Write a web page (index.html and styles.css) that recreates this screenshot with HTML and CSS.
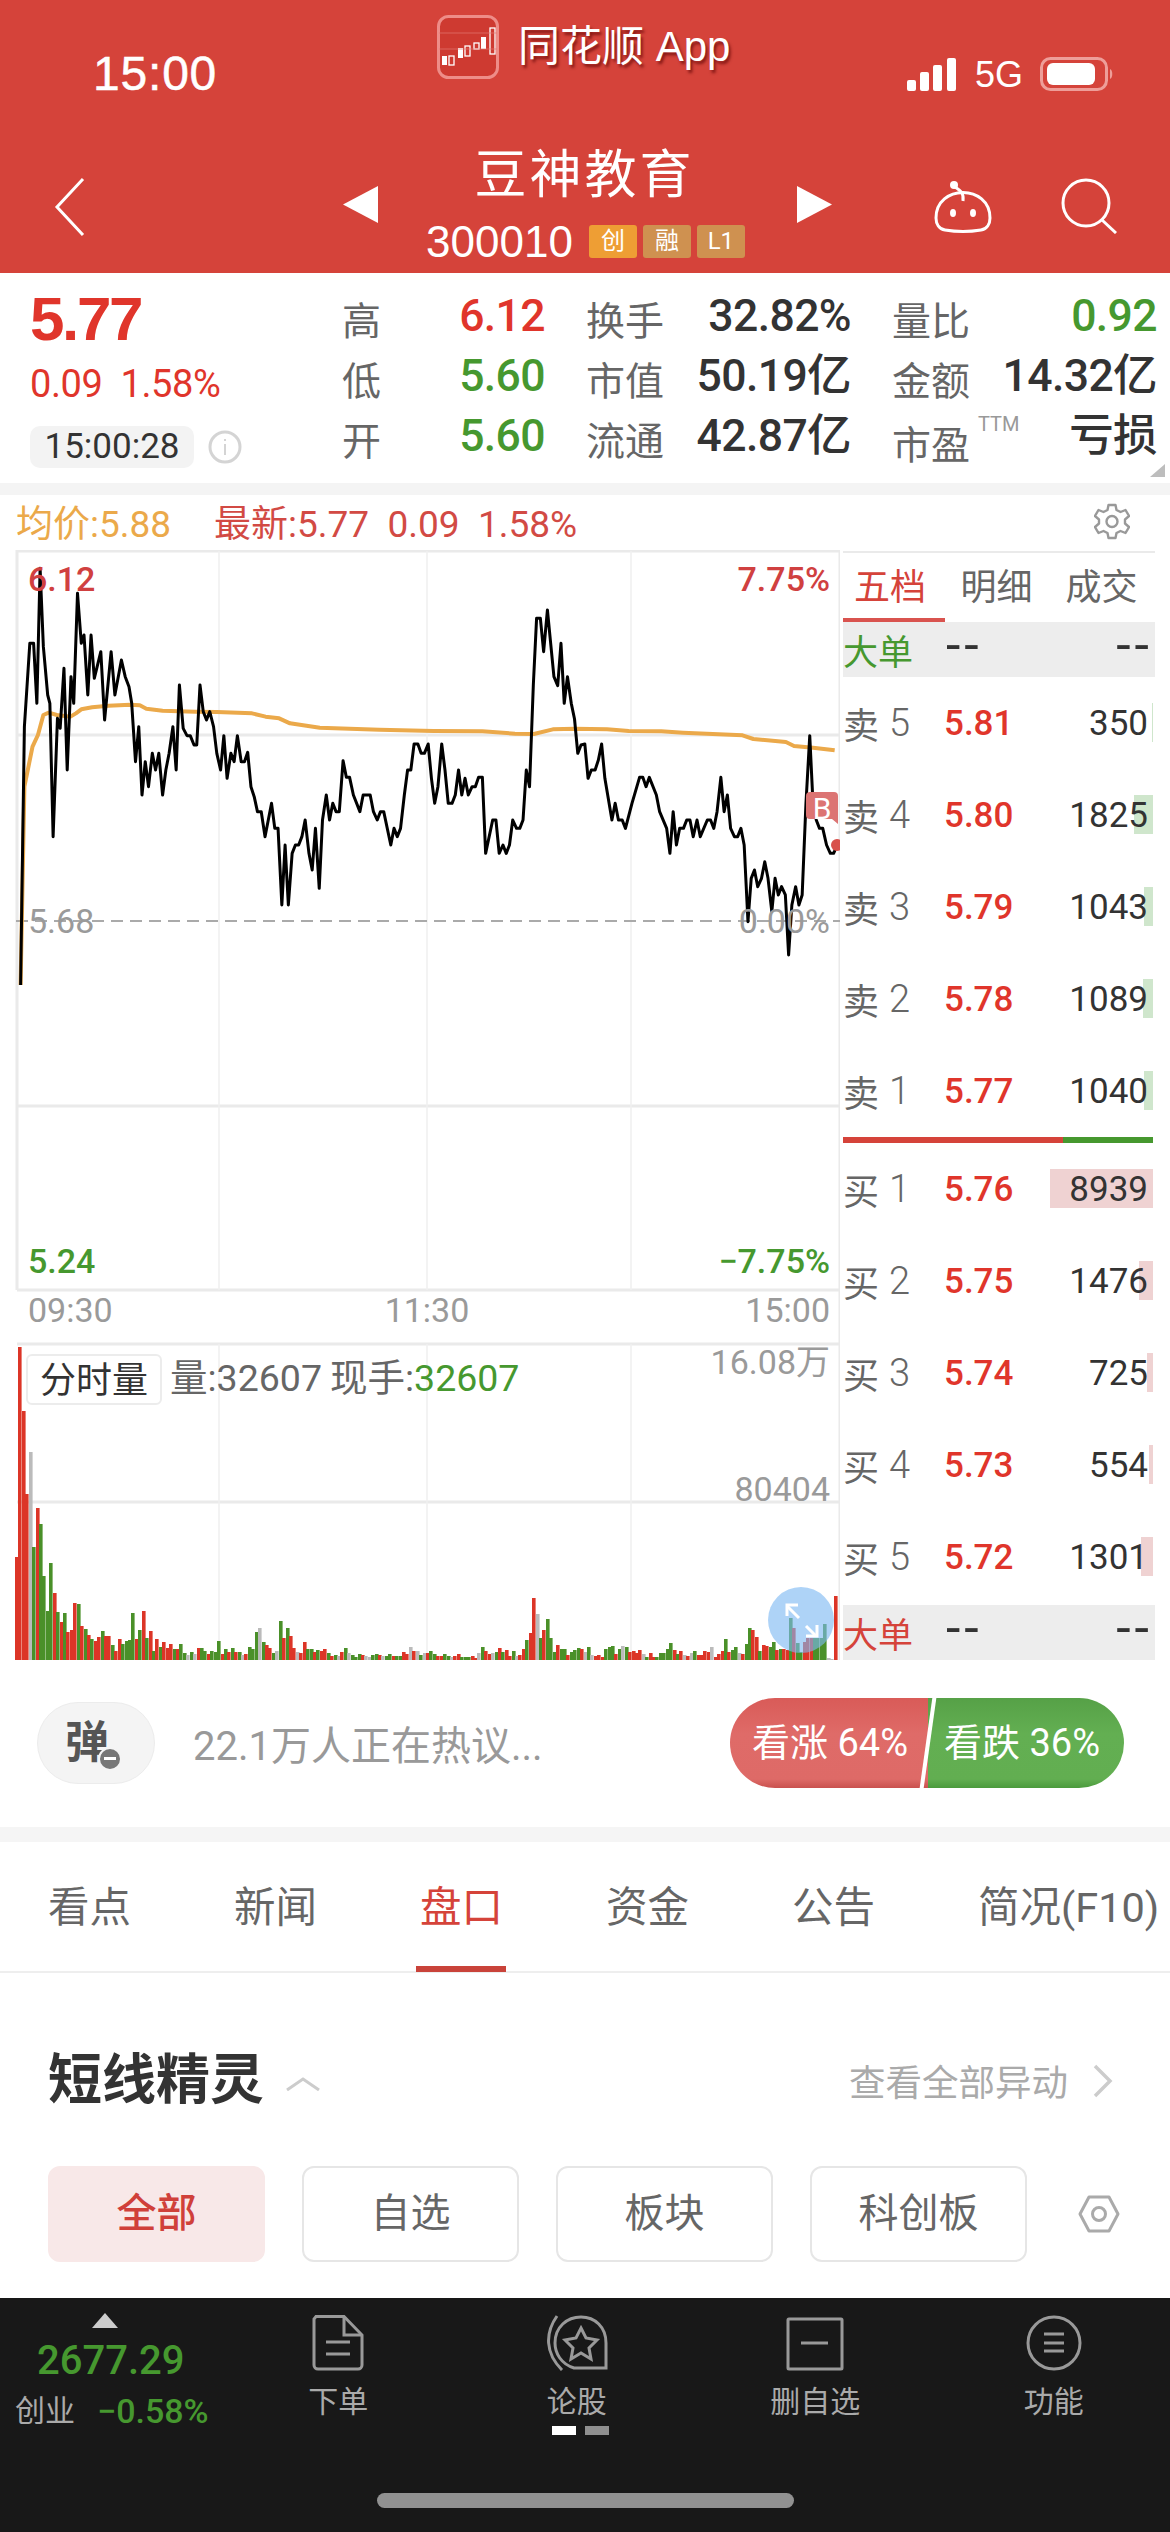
FILE: index.html
```html
<!DOCTYPE html>
<html lang="zh">
<head>
<meta charset="utf-8">
<title>豆神教育</title>
<link rel="stylesheet" href="styles.css">
</head>
<body>
<div class="page">
  <header class="header">
    <div class="status">
      <div class="clock">15:00</div>
      <div class="app">
        <svg class="app-icon" viewBox="0 0 62 64">
          <rect x="1.5" y="1.5" width="59" height="61" rx="10" fill="#CE3A31" stroke="#EE8D88" stroke-width="3"/>
          <g fill="#fff"><rect x="5" y="41" width="5" height="9"/><rect x="21" y="33" width="5" height="10"/><rect x="44" y="22" width="5" height="12"/></g>
          <g fill="none" stroke="#fff" stroke-width="1.3"><rect x="12" y="41" width="5" height="9"/><rect x="28" y="31" width="5" height="10"/><rect x="37" y="28" width="5" height="6"/><rect x="53" y="13" width="5" height="26"/></g>
          <path d="M2 34H60M2 18H60" stroke="#E27A72" stroke-width=".7"/>
        </svg>
        <span class="app-name">同花顺 App</span>
      </div>
      <div class="signals">
        <svg class="bars" viewBox="0 0 50 33"><g fill="#fff"><rect x="0" y="22" width="9" height="11" rx="2"/><rect x="13" y="14" width="9" height="19" rx="2"/><rect x="26" y="7" width="9" height="26" rx="2"/><rect x="40" y="0" width="9" height="33" rx="2"/></g></svg>
        <span class="net">5G</span>
        <svg class="battery" viewBox="0 0 74 34"><rect x="1.5" y="1.5" width="65" height="31" rx="9" fill="none" stroke="#EE9E99" stroke-width="3"/><rect x="7" y="6" width="48" height="22" rx="6" fill="#fff"/><path d="M70 12c3 1 3 9 0 10z" fill="#EE9E99"/></svg>
      </div>
    </div>
    <nav class="nav">
      <svg class="back" viewBox="0 0 32 60"><path d="M29 2 3 30l26 28" fill="none" stroke="#fff" stroke-width="3"/></svg>
      <svg class="arrow arrow-left" viewBox="0 0 35 37"><path d="M35 0V37L0 18.500z" fill="#fff"/></svg>
      <div class="stock">
        <div class="stock-name">豆神教育</div>
        <div class="stock-code"><span>300010</span><b class="tag tag-a">创</b><b class="tag">融</b><b class="tag">L1</b></div>
      </div>
      <svg class="arrow" viewBox="0 0 35 37"><path d="M0 0V37L35 18.500z" fill="#fff"/></svg>
      <svg class="robot" viewBox="0 0 60 54"><path d="M3 38C3 4 57 4 57 38c0 6-3 11-9 12-12 2-24 2-36 0-6-1-9-6-9-12z" fill="none" stroke="#fff" stroke-width="3"/><path d="M30 21c1-8-2-10-8-14" fill="none" stroke="#fff" stroke-width="3"/><circle cx="21" cy="5" r="4" fill="#fff"/><ellipse cx="20" cy="33" rx="3" ry="4" fill="#fff"/><ellipse cx="40" cy="33" rx="3" ry="4" fill="#fff"/></svg>
      <svg class="search" viewBox="0 0 58 56"><circle cx="26" cy="25" r="23" fill="none" stroke="#fff" stroke-width="3"/><path d="M42 42l14 13" stroke="#fff" stroke-width="3"/></svg>
    </nav>
  </header>

  <section class="quote">
    <div class="quote-left">
      <div class="last">5.77</div>
      <div class="change">0.09&nbsp;&nbsp;1.58%</div>
      <div class="clock-row">
        <span class="chip">15:00:28</span>
        <svg class="info" viewBox="0 0 34 34"><circle cx="17" cy="17" r="15" fill="none" stroke="#d4d4d4" stroke-width="3"/><path d="M17 14v11M17 9v2" stroke="#d4d4d4" stroke-width="2"/></svg>
      </div>
    </div>
    <div class="stats">
      <div class="stat s1"><span class="k">高</span><span class="v up">6.12</span></div>
      <div class="stat s2"><span class="k">换手</span><span class="v">32.82%</span></div>
      <div class="stat s3"><span class="k">量比</span><span class="v down">0.92</span></div>
      <div class="stat s1"><span class="k">低</span><span class="v down">5.60</span></div>
      <div class="stat s2"><span class="k">市值</span><span class="v">50.19亿</span></div>
      <div class="stat s3"><span class="k">金额</span><span class="v">14.32亿</span></div>
      <div class="stat s1"><span class="k">开</span><span class="v down">5.60</span></div>
      <div class="stat s2"><span class="k">流通</span><span class="v">42.87亿</span></div>
      <div class="stat s3"><span class="k">市盈<sup class="ttm">TTM</sup></span><span class="v">亏损</span></div>
    </div>
    <i class="corner"></i>
  </section>

  <section class="market">
    <div class="legend">
      <span class="avg">均价:5.88</span>
      <span class="now">最新:5.77&nbsp;&nbsp;0.09&nbsp;&nbsp;1.58%</span>
      <svg class="gear" viewBox="0 0 36 38"><g fill="none" stroke="#999"><path stroke-width="2.400" stroke-linejoin="round" d="M14.500 2h7l1 5 4 2 5-2 3.500 6-4 3.500v4l4 3.500-3.500 6-5-2-4 2-1 5h-7l-1-5-4-2-5 2L1 24l4-3.500v-4L1 13l3.500-6 5 2 4-2z"/><circle cx="18" cy="18.500" r="5.500" stroke-width="2.400"/></g></svg>
    </div>
    <div class="market-body">
      <svg class="chart" viewBox="0 550 840 1110">
        <g class="grid">
          <path d="M17 1344H840M17 1502H840" class="thick"/>
          <path d="M17 551H840M17 735H840M17 1106H840M17 1290H840M17 550V1290M840 550V1660" class="thick"/>
          <path d="M219 551V1290M427 551V1290M631 551V1290M219 1344V1660M427 1344V1660M631 1344V1660" class="thin"/>
        </g>
        <path d="M16 921H840" class="dash"/>
        <g transform="translate(0 540) scale(.542 .33333)">
          <polyline class="avg-line" points="38,1335 45,740 50,700 60,620 70,585 80,525 90,518 105,525 130,530 140,520 150,508 170,502 200,497 240,494 258,496 270,506 300,512 360,515 400,516 465,520 490,530 515,535 535,550 590,563 700,569 800,573 890,574 950,581 985,582 1020,568 1060,566 1120,568 1160,573 1220,574 1260,578 1370,586 1390,597 1450,606 1465,618 1500,623 1540,631"/>
          <polyline class="px-line" points="38,1335 45,560 55,310 62,310 68,490 74,85 80,320 88,465 92,490 98,890 106,535 111,565 118,385 124,690 131,410 136,490 143,160 150,310 155,285 162,465 168,285 174,415 186,335 193,540 205,335 212,465 224,360 231,410 238,440 243,490 250,665 256,560 262,765 268,665 274,740 281,640 287,690 293,640 300,765 306,690 312,640 319,560 325,690 331,435 338,565 345,587 351,587 358,615 363,615 369,435 375,515 381,540 387,515 394,560 400,640 407,690 413,587 419,715 426,640 432,665 438,587 445,665 451,665 457,637 463,740 469,770 475,815 482,815 489,890 501,790 507,865 513,865 520,1095 526,915 532,1095 539,940 545,915 551,915 557,890 563,840 570,940 576,990 582,865 589,1045 595,840 602,765 608,840 614,790 620,815 626,815 633,662 639,712 645,712 652,765 664,815 670,765 683,765 689,815 696,840 702,815 708,815 721,915 727,865 733,890 739,865 746,765 752,690 758,690 764,612 771,612 777,640 783,640 790,612 796,715 802,790 808,740 815,612 821,690 827,790 834,790 840,765 846,690 852,765 858,715 864,765 871,740 877,740 883,712 890,712 896,940 909,840 915,840 921,940 928,915 934,940 940,915 946,840 953,865 959,865 965,840 971,690 977,740 984,435 990,235 997,235 1003,335 1010,210 1016,310 1022,410 1029,437 1035,310 1041,490 1047,410 1054,490 1060,537 1066,640 1072,615 1079,612 1085,715 1091,690 1098,690 1104,660 1110,612 1116,715 1129,840 1135,790 1141,840 1148,840 1154,865 1166,790 1180,712 1186,712 1192,740 1198,712 1211,765 1217,815 1230,865 1236,940 1242,815 1248,915 1254,865 1261,865 1267,840 1273,840 1279,890 1286,840 1292,890 1305,840 1311,840 1317,865 1323,815 1330,712 1336,815 1342,765 1348,865 1355,890 1361,890 1367,865 1373,915 1380,1145 1386,1015 1392,990 1398,1040 1405,1015 1411,965 1417,1015 1424,1115 1430,1015 1436,1065 1442,1040 1449,1065 1455,1245 1461,1095 1468,1040 1474,1095 1480,1065 1487,790 1494,587 1500,790 1506,840 1512,865 1518,865 1525,915 1532,940 1538,940 1545,915"/>
        </g>
        <path d="M806 796a4 4 0 0 1 4-4h24a4 4 0 0 1 4 4v28l-6-5h-22a4 4 0 0 1-4-4z" fill="#DC7473"/>
        <text x="822" y="819" class="t-b">B</text>
        <circle cx="837" cy="845" r="6" fill="#D8514C"/>

        <text x="28" y="591" class="t up-c">6.12</text>
        <text x="830" y="591" class="t end up-c">7.75%</text>
        <text x="28" y="933" class="t gray-c">5.68</text>
        <text x="830" y="933" class="t end gray-c">0.00%</text>
        <text x="28" y="1273" class="t down-c">5.24</text>
        <text x="830" y="1273" class="t end down-c">−7.75%</text>
        <text x="28" y="1322" class="t gray-c">09:30</text>
        <text x="427" y="1322" class="t mid gray-c">11:30</text>
        <text x="830" y="1322" class="t end gray-c">15:00</text>
        <text x="830" y="1374" class="t end gray-c">16.08万</text>
        <text x="830" y="1501" class="t end gray-c">80404</text>

        <g id="vol"></g>

        <rect x="27" y="1355" width="134" height="49" rx="5" class="vol-chip"/>
        <text x="40" y="1393" class="t-vol dark-c">分时量</text>
        <text x="170" y="1391" class="t-vol"><tspan>量:32607</tspan><tspan dx="8">现手:</tspan><tspan class="down-f">32607</tspan></text>

        <circle cx="801" cy="1620" r="33" fill="#7DB8F2" fill-opacity=".62"/>
        <g stroke="#fff" stroke-width="3" fill="none"><path d="M787 1606l12 12M806 1626l10 10"/><path d="M787 1616v-11h11M817 1625v11h-11"/></g>
      </svg>

      <aside class="book">
        <div class="book-tabs"><span class="on">五档</span><span>明细</span><span>成交</span></div>
        <div class="big"><span class="big-k down-t">大单</span><span class="dash-v">--</span><span class="dash-q">--</span></div>
        <div class="row"><i class="sell-bar" style="width:1px"></i><span class="lab">卖<em>5</em></span><b>5.81</b><span class="qty">350</span></div>
        <div class="row"><i class="sell-bar" style="width:19px"></i><span class="lab">卖<em>4</em></span><b>5.80</b><span class="qty">1825</span></div>
        <div class="row"><i class="sell-bar" style="width:9px"></i><span class="lab">卖<em>3</em></span><b>5.79</b><span class="qty">1043</span></div>
        <div class="row"><i class="sell-bar" style="width:10px"></i><span class="lab">卖<em>2</em></span><b>5.78</b><span class="qty">1089</span></div>
        <div class="row"><i class="sell-bar" style="width:9px"></i><span class="lab">卖<em>1</em></span><b>5.77</b><span class="qty">1040</span></div>
        <div class="split"><i></i><u></u></div>
        <div class="row"><i class="buy-bar" style="width:103px"></i><span class="lab">买<em>1</em></span><b>5.76</b><span class="qty">8939</span></div>
        <div class="row"><i class="buy-bar" style="width:14px"></i><span class="lab">买<em>2</em></span><b>5.75</b><span class="qty">1476</span></div>
        <div class="row"><i class="buy-bar" style="width:6px"></i><span class="lab">买<em>3</em></span><b>5.74</b><span class="qty">725</span></div>
        <div class="row"><i class="buy-bar" style="width:4px"></i><span class="lab">买<em>4</em></span><b>5.73</b><span class="qty">554</span></div>
        <div class="row"><i class="buy-bar" style="width:12px"></i><span class="lab">买<em>5</em></span><b>5.72</b><span class="qty">1301</span></div>
        <div class="big"><span class="big-k up-t">大单</span><span class="dash-v">--</span><span class="dash-q">--</span></div>
      </aside>
    </div>
  </section>

  <section class="talk">
    <div class="danmu"><span>弹</span><i class="minus"></i></div>
    <div class="talk-text">22.1万人正在热议...</div>
    <div class="vote"><span class="vote-up">看涨 64%</span><span class="vote-down">看跌 36%</span><i class="vote-gap"></i></div>
  </section>

  <div class="tabs">
    <span>看点</span><span>新闻</span><span class="on">盘口</span><span>资金</span><span>公告</span><span>简况(F10)</span>
  </div>

  <section class="genie">
    <div class="genie-head">
      <h2>短线精灵</h2>
      <svg class="chev-up" viewBox="0 0 36 14"><path d="M2 13 18 2l16 11" fill="none" stroke="#ccc" stroke-width="3"/></svg>
      <a class="more">查看全部异动</a>
      <svg class="chev-r" viewBox="0 0 22 34"><path d="M3 2l15 15L3 32" fill="none" stroke="#ccc" stroke-width="3.500"/></svg>
    </div>
    <div class="chips">
      <span class="filter on">全部</span><span class="filter">自选</span><span class="filter">板块</span><span class="filter">科创板</span>
      <svg class="hex" viewBox="0 0 42 38"><path d="M11 2h20l9 17-9 17H11L2 19z" fill="none" stroke="#aaa" stroke-width="3" stroke-linejoin="round"/><circle cx="21" cy="19" r="6.500" fill="none" stroke="#aaa" stroke-width="3"/></svg>
    </div>
  </section>

  <footer class="foot">
    <div class="foot-row">
      <div class="index">
        <i class="index-up"></i>
        <div class="index-val">2677.29</div>
        <div class="index-line"><span>创业</span><b>−0.58%</b></div>
      </div>
      <div class="foot-tab">
        <svg viewBox="0 0 52 56"><path d="M4 1.500H32L50 20V50a4 4 0 0 1-4 4H6a4 4 0 0 1-4-4V4z" fill="none" stroke="#999" stroke-width="3"/><path d="M32 2V20H50M14 27H38M14 39H38" fill="none" stroke="#999" stroke-width="3"/></svg>
        <span>下单</span>
      </div>
      <div class="foot-tab">
        <svg viewBox="0 0 62 56"><g fill="none" stroke="#999" stroke-width="3"><path d="M11 1C-1 18-1 38 16 55"/><path d="M60 53H28C15 49 9 38 9 28 9 12 21 2 35 2 49 2 60 12 60 28z"/><path d="M35 13l5 10 11 2-8 8 2 11-10-6-10 6 2-11-8-8 11-2z"/></g></svg>
        <span>论股</span>
        <div class="pager"><i class="on"></i><i></i></div>
      </div>
      <div class="foot-tab">
        <svg viewBox="0 0 58 56"><rect x="2" y="4" width="54" height="50" rx="1" fill="none" stroke="#999" stroke-width="3"/><path d="M15 28H42" stroke="#999" stroke-width="3"/></svg>
        <span>删自选</span>
      </div>
      <div class="foot-tab">
        <svg viewBox="0 0 56 56"><circle cx="28" cy="28" r="26" fill="none" stroke="#999" stroke-width="3"/><path d="M18 19H38M18 28H38M18 36H38" stroke="#999" stroke-width="3"/></svg>
        <span>功能</span>
      </div>
    </div>
    <div class="home"></div>
  </footer>
</div>
<script src="app.js"></script>
</body>
</html>
```

FILE: styles.css
```css
* { box-sizing: border-box; }
html, body { margin: 0; padding: 0; background: #fff; }
body { font-family: Roboto, "Noto Sans CJK SC", sans-serif; }
.page { width: 1170px; height: 2532px; overflow: hidden; display: flex; flex-direction: column; }
i, em { font-style: normal; }

/* header */
.header { height: 273px; background: #D5433A; color: #fff; flex: none; }
.status { height: 110px; display: flex; align-items: flex-start; padding-left: 93px; }
.clock { width: 123px; margin-top: 48px; font: 48px/52px "Liberation Sans", sans-serif; letter-spacing: .8px; -webkit-text-stroke: .5px #fff; }
.app { margin: 15px 0 0 221px; width: 290px; display: flex; align-items: center; }
.app-icon { width: 62px; height: 64px; flex: none; }
.app-name { margin-left: 19px; font-size: 42px; line-height: 56px; white-space: nowrap; text-shadow: 2px 3px 3px rgba(90, 0, 0, .65); font-family: "Liberation Sans", "Noto Sans CJK SC", sans-serif; }
.signals { margin: 57px 0 0 180px; display: flex; align-items: center; }
.bars { width: 50px; height: 33px; }
.net { margin-left: 18px; width: 50px; font: 36px/33px "Liberation Sans", sans-serif; }
.battery { margin-left: 15px; width: 74px; height: 34px; }

.nav { height: 163px; display: flex; align-items: flex-start; padding-left: 54px; }
.back { width: 32px; height: 60px; margin-top: 67px; flex: none; }
.arrow { width: 35px; height: 37px; margin-top: 76px; flex: none; }
.arrow-left { margin-left: 257px; }
.stock { width: 419px; flex: none; display: flex; flex-direction: column; align-items: center; }
.stock-name { margin-top: 34px; font-size: 52px; line-height: 64px; letter-spacing: 3px; padding-right: 6px; }
.stock-code { margin-top: 17px; display: flex; align-items: center; height: 33px; font: 44px/33px "Liberation Sans", sans-serif; letter-spacing: 0; padding-left: 2px; }
.stock-code span { margin-right: 16px; }
.tag { width: 48px; height: 33px; margin-right: 6px; border-radius: 3px; background: #CF9150; font: 400 24px/33px Roboto, "Noto Sans CJK SC", sans-serif; text-align: center; color: #fff; }
.tag-a { background: #EE9E34; }
.robot { margin-left: 101px; width: 60px; height: 54px; margin-top: 70px; flex: none; }
.search { margin-left: 67px; width: 58px; height: 56px; margin-top: 68px; flex: none; }

/* quote */
.quote { position: relative; height: 210px; flex: none; display: flex; background: #fff; }
.quote-left { width: 342px; flex: none; padding: 14px 0 0 30px; }
.last { font: 700 62px/64px "Liberation Sans", sans-serif; color: #E0352B; letter-spacing: -2.400px; }
.change { margin-top: 13px; font-size: 38px; line-height: 40px; color: #E0352B; letter-spacing: -.4px; }
.clock-row { margin-top: 22px; display: flex; align-items: center; }
.chip { width: 164px; height: 42px; border-radius: 10px; background: #F3F3F3; color: #333; font-size: 35px; line-height: 42px; text-align: center; }
.info { width: 34px; height: 34px; margin-left: 14px; }
.stats { padding-top: 13px; display: grid; grid-template-columns: 203px 265px 265px; grid-auto-rows: 60px; column-gap: 41px; }
.stat { display: flex; align-items: center; justify-content: space-between; }
.k { font-size: 39px; line-height: 48px; padding-top: 12px; color: #666; white-space: nowrap; }
.v { font-size: 44.500px; font-weight: 500; line-height: 48px; color: #333; white-space: nowrap; letter-spacing: -.6px; }
.up { color: #E0352B; }
.down { color: #46982F; }
.ttm { margin-left: 8px; font-size: 20px; line-height: 20px; color: #999; vertical-align: 28px; }
.corner { position: absolute; right: 5px; bottom: 6px; width: 0; height: 0; border-left: 15px solid transparent; border-bottom: 13px solid #BDBDBD; }

/* market */
.market { height: 1177px; flex: none; border-top: 12px solid #F4F4F4; display: flex; flex-direction: column; }
.legend { height: 55px; flex: none; display: flex; align-items: center; padding-left: 16px; font-size: 37px; white-space: nowrap; padding-bottom: 4px; }
.avg { width: 198px; color: #EBA94A; }
.now { color: #D24A44; }
.gear { position: absolute; left: 1094px; top: 503px; width: 36px; height: 38px; }
.market-body { display: flex; height: 1110px; flex: none; }
.chart { width: 840px; height: 1110px; flex: none; display: block; }
.thick { stroke: #EAEAEA; stroke-width: 3; fill: none; }
.thin { stroke: #F0F0F0; stroke-width: 1.500; fill: none; }
.dash { stroke: #AAA; stroke-width: 2; stroke-dasharray: 12 7; fill: none; }
.avg-line { fill: none; stroke: #EBA94A; stroke-width: 4; vector-effect: non-scaling-stroke; stroke-linejoin: round; }
.px-line { fill: none; stroke: #000; stroke-width: 3; vector-effect: non-scaling-stroke; stroke-linejoin: round; }
.t { font-size: 34px; }
.end { text-anchor: end; }
.mid { text-anchor: middle; }
.up-c { fill: #D04040; font-weight: 500; }
.gray-c { fill: #9A9A9A; }
.down-c { fill: #46982F; font-weight: 500; }
.dark-c { fill: #333; }
.t-b { font-size: 30px; fill: #fff; text-anchor: middle; }
.vol-chip { fill: #fff; stroke: #ECECEC; stroke-width: 2; }
.t-vol { font-size: 37.500px; fill: #666; }
.t-vol.dark-c { font-size: 36px; fill: #333; }
.down-f { fill: #46982F; }

.book { width: 330px; flex: none; padding: 1px 0 0 3px; display: flex; flex-direction: column; }
.book-tabs { width: 312px; height: 71px; flex: none; display: flex; border-top: 2px solid #EAEAEA; padding-top: 13px; font-size: 36px; line-height: 44px; color: #666; }
.book-tabs span { width: 105px; height: 58px; text-align: center; flex: none; }
.book-tabs .on { width: 102px; color: #D5433A; border-bottom: 6px solid #D9534F; margin-right: -1px; padding-right: 8px; }
.big { width: 312px; height: 55px; flex: none; background: #EDEDED; display: flex; align-items: center; font-size: 35px; }
.big-k { width: 103px; }
.down-t { color: #46982F; }
.up-t { color: #D5433A; }
.dash-v, .dash-q { color: #333; font-size: 52px; line-height: 40px; letter-spacing: 4px; padding-bottom: 8px; }
.dash-q { margin-left: auto; margin-right: 2px; }
.row { position: relative; width: 310px; height: 92px; flex: none; display: grid; grid-template-columns: 101px 1fr auto; align-items: center; padding-right: 5px; }
.lab { font-size: 36px; color: #666; display: flex; align-items: center; }
.lab em { margin-left: 10px; font-size: 38px; font-weight: 300; }
.row b { font-size: 35px; font-weight: 500; color: #E0352B; }
.qty { font-size: 35px; color: #333; position: relative; }
.sell-bar, .buy-bar { position: absolute; right: 0; top: 26px; height: 39px; }
.sell-bar { background: #CFE6CC; }
.buy-bar { background: #EFD2D2; }
.split { width: 310px; height: 6px; flex: none; display: flex; }
.split i { width: 220px; background: #D5433A; }
.split u { flex: 1; background: #46982F; }
.row:has(+ .big) { margin-bottom: 2px; }

/* talk */
.talk { height: 182px; flex: none; display: flex; align-items: center; border-bottom: 15px solid #F5F5F5; padding: 0 0 2px 37px; }
.danmu { position: relative; width: 118px; height: 82px; border-radius: 41px; background: #F4F4F4; border: 1px solid #ECECEC; font-size: 44px; font-weight: 700; line-height: 80px; color: #555; padding-left: 27px; flex: none; }
.minus { position: absolute; left: 60px; top: 44px; width: 24px; height: 24px; border-radius: 50%; background: #777; border: 2px solid #F4F4F4; }
.minus::after { content: ""; display: block; width: 12px; height: 3px; margin: 8px auto 0; background: #fff; }
.talk-text { margin-left: 38px; width: 537px; font-size: 40px; color: #999; flex: none; }
.vote { position: relative; width: 394px; height: 90px; flex: none; display: flex; border-radius: 45px; overflow: hidden; color: #fff; font-size: 38px; line-height: 90px; }
.vote-up { width: 198px; background: linear-gradient(#D95B58, #DF6B68 40%, #DE6A67 90%, #C9514E); padding-left: 22px; white-space: nowrap; }
.vote-down { flex: 1; background: linear-gradient(#56A147, #63AF52 40%, #62AE51 90%, #4A9A3C); padding-left: 16px; white-space: nowrap; }
.vote-gap { position: absolute; left: 196px; top: -2px; width: 4px; height: 94px; background: #fff; transform: rotate(8deg); }

/* tabs */
.tabs { height: 131px; flex: none; display: flex; border-bottom: 2px solid #EEE; padding-left: 48px; font-size: 41.500px; line-height: 132px; color: #666; gap: 0; }
.tabs span { position: relative; width: 186px; flex: none; white-space: nowrap; }
.tabs .on { color: #D5433A; }
.tabs .on::after { content: ""; position: absolute; left: -4px; bottom: -1px; width: 90px; height: 6px; background: #C9433A; }

/* genie */
.genie { flex: 1; padding: 0 0 0 48px; }
.genie-head { display: flex; align-items: center; height: 193px; padding: 24px 0 2px; }
h2 { margin: 0; font-size: 54px; font-weight: 700; color: #333; line-height: 60px; }
.chev-up { margin-left: 21px; width: 36px; height: 14px; margin-top: 6px; }
.more { margin-left: 528px; font-size: 36.500px; color: #AAA; white-space: nowrap; }
.chev-r { margin-left: 24px; width: 22px; height: 34px; }
.chips { display: flex; align-items: center; gap: 37px; }
.filter { width: 217px; height: 96px; border: 2px solid #E6E6E6; border-radius: 12px; text-align: center; font-size: 40px; line-height: 92px; color: #666; flex: none; }
.filter.on { background: #F8E8E8; border-color: #F8E8E8; color: #D0403A; font-weight: 500; }
.hex { width: 42px; height: 38px; margin-left: 14px; }

/* footer */
.foot { height: 234px; flex: none; background: #181818; display: flex; flex-direction: column; color: #AAA; }
.foot-row { height: 195px; display: flex; }
.index { width: 219px; flex: none; padding: 15px 0 0 15px; }
.index-up { display: block; width: 0; height: 0; margin-left: 77px; border-left: 13px solid transparent; border-right: 13px solid transparent; border-bottom: 15px solid #CCC; }
.index-val { margin: 11px 0 0 22px; font-size: 40px; line-height: 44px; color: #46982F; font-weight: 500; }
.index-line { display: flex; align-items: center; margin-top: 8px; font-size: 30px; line-height: 40px; }
.index-line b { margin-left: 22px; font-size: 34px; font-weight: 500; color: #46982F; }
.foot-tab { width: 238.500px; flex: none; display: flex; flex-direction: column; align-items: center; padding-top: 17px; font-size: 30px; line-height: 34px; }
.foot-tab svg { height: 56px; width: 62px; }
.foot-tab span { margin-top: 14px; }
.pager { display: flex; gap: 9px; margin: 7px 0 0 8px; }
.pager i { width: 24px; height: 9px; background: #8F8F8F; }
.pager .on { background: #fff; }
.home { width: 417px; height: 15px; margin: 0 auto; background: #919191; border-radius: 8px; }
```

FILE: app.js
```js
var data = "r103 r313 r249 r166 y208 g113 r152 g136 g84 g49 g97 r67 g48 r38 g47 r28 r30 r57 g56 r34 g31 r25 g21 r19 r23 g29 r24 r24 g15 r9 r21 g16 g19 g20 g47 r21 g30 r49 g22 r29 g9 r21 g13 r18 r12 r16 g11 r11 g16 g7 y5 g8 y6 r12 g12 g9 r6 g9 g8 g19 r6 g11 r8 g12 r8 g8 y5 r6 g13 g11 g28 y32 g18 r15 r12 g7 y9 g39 r22 g32 r24 r12 y8 r7 r18 g11 g11 r8 g10 r9 r11 g7 r4 g5 y4 r8 g12 y7 g5 g3 g6 r5 y4 y3 g5 g6 r5 y4 g4 g6 r4 g4 g4 r8 r6 y13 r9 y9 g5 y7 r7 g9 g6 r4 r4 g6 g4 y3 r4 r6 g3 g3 g3 r4 r2 y7 g13 r9 r6 y7 g8 r12 g8 r10 r4 g9 y4 r5 r11 g20 r27 r62 y46 g22 r30 g41 g22 g8 r15 g11 g11 r5 g8 g10 g12 r11 y8 g13 y5 r4 r5 r3 g11 g13 g14 r6 g11 y14 g13 r8 r9 r7 r10 y6 g3 r7 r3 g3 g7 g7 g11 g17 r10 g6 r9 y5 r4 y7 g9 r5 r5 r9 r8 y13 r3 r6 r9 g21 r8 g10 g13 y7 r6 g16 g32 r30 r23 g9 r15 r14 g13 g18 r10 g11 r11 r10 g42 r32 g17 g8 r18 r22 r22 g22 g22 g22 g36 y2 y1 r64";
var colors = { r: "#DC3527", g: "#4A9029", y: "#BBBBBB" };
var vol = document.getElementById("vol");
data.split(" ").forEach(function (item, i) {
  var h = Number(item.slice(1));
  var rect = document.createElementNS("http://www.w3.org/2000/svg", "rect");
  rect.setAttribute("x", Math.round(15 + 3.425 * i));
  rect.setAttribute("y", 1660 - h);
  rect.setAttribute("width", 3.6);
  rect.setAttribute("height", h);
  rect.setAttribute("fill", colors[item[0]]);
  vol.appendChild(rect);
});
```
